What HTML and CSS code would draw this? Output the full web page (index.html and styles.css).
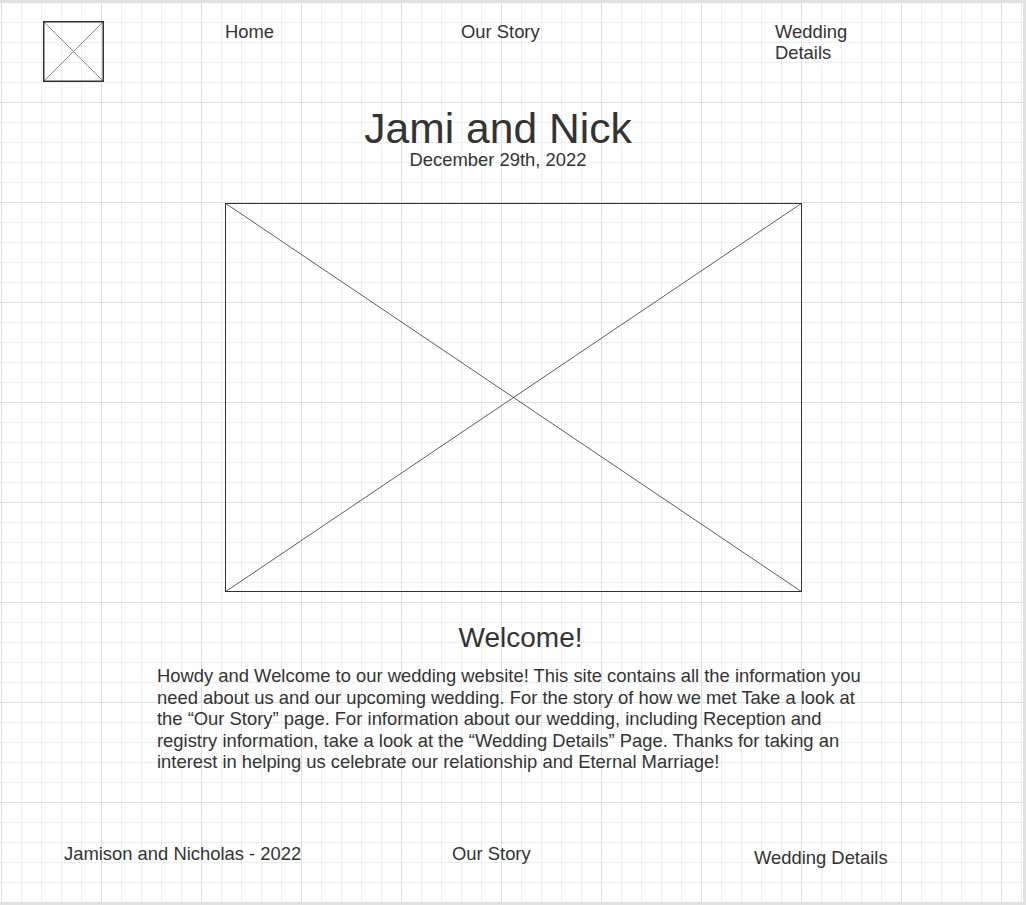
FILE: index.html
```html
<!DOCTYPE html>
<html lang="en">
<head>
<meta charset="utf-8">
<title>Jami and Nick</title>
<link rel="stylesheet" href="styles.css">
</head>
<body>
<div class="page">
  <header class="header">
    <div class="logo">
      <svg width="61" height="61" viewBox="0 0 61 61">
        <line x1="1" y1="1" x2="60" y2="60" class="logo-x"/>
        <line x1="60" y1="1" x2="1" y2="60" class="logo-x"/>
        <rect x="0.75" y="0.75" width="59.5" height="59.5" class="logo-box"/>
      </svg>
    </div>
    <a class="nav-link">Home</a>
    <a class="nav-link">Our Story</a>
    <a class="nav-link nav-narrow">Wedding Details</a>
  </header>

  <section class="hero">
    <h1 class="title">Jami and Nick</h1>
    <div class="date">December 29th, 2022</div>
  </section>

  <div class="photo">
    <svg width="577" height="389" viewBox="0 0 577 389" preserveAspectRatio="none">
      <line x1="0" y1="0" x2="577" y2="389" class="photo-x"/>
      <line x1="577" y1="0" x2="0" y2="389" class="photo-x"/>
      <rect x="0.5" y="0.5" width="576" height="388" class="photo-box"/>
    </svg>
  </div>

  <h2 class="welcome">Welcome!</h2>
  <p class="intro">Howdy and Welcome to our wedding website! This site contains all the information you need about us and our upcoming wedding. For the story of how we met Take a look at the “Our Story” page. For information about our wedding, including Reception and registry information, take a look at the “Wedding Details” Page. Thanks for taking an interest in helping us celebrate our relationship and Eternal Marriage!</p>

  <footer class="footer">
    <div class="foot-item">Jamison and Nicholas - 2022</div>
    <div class="foot-item">Our Story</div>
    <div class="foot-item foot-low">Wedding Details</div>
  </footer>
</div>
</body>
</html>
```

FILE: styles.css
```css
html, body {
  margin: 0;
  padding: 0;
}

body {
  background: #e2e2e2;
  font-family: "Liberation Sans", Arial, Helvetica, sans-serif;
  color: #333333;
}

.page {
  margin-top: 2px;
  width: 1023px;
  height: 900px;
  box-sizing: border-box;
  background-color: #ffffff;
  background-image:
    linear-gradient(to right, #dedede 1px, transparent 1px),
    linear-gradient(to bottom, #dedede 1px, transparent 1px),
    linear-gradient(to right, #eeeeee 1px, transparent 1px),
    linear-gradient(to bottom, #eeeeee 1px, transparent 1px);
  background-size: 100px 100px, 100px 100px, 20px 20px, 20px 20px;
  background-position: 1px 0, 0 0, 1px 0, 0 0;
  overflow: hidden;
}

.header {
  display: grid;
  grid-template-columns: 182px 236px 314px 100px;
  padding-top: 19px;
  padding-left: 43px;
  height: 60px;
  font-size: 18.4px;
  line-height: 20.5px;
}

.logo {
  width: 61px;
  height: 61px;
}

.logo svg {
  display: block;
}

.logo-x {
  stroke: #8c8c8c;
  stroke-width: 1;
}

.logo-box {
  fill: none;
  stroke: #333333;
  stroke-width: 1.5;
}

.nav-link {
  padding-top: 1px;
  color: #333333;
  text-decoration: none;
}

.nav-narrow {
  width: 90px;
}

.hero {
  width: 996px;
  text-align: center;
  margin-top: 26px;
}

.title {
  margin: 0;
  font-size: 42.6px;
  font-weight: normal;
  line-height: 43px;
}

.date {
  font-size: 18.4px;
  line-height: 20px;
}

.photo {
  margin-top: 33px;
  margin-left: 225px;
  width: 577px;
  height: 389px;
}

.photo svg {
  display: block;
}

.photo-x {
  stroke: #333333;
  stroke-width: 0.8;
}

.photo-box {
  fill: none;
  stroke: #333333;
  stroke-width: 1;
}

.welcome {
  margin: 30px 0 0 0;
  padding-left: 18px;
  text-align: center;
  font-size: 28px;
  font-weight: normal;
  line-height: 32px;
}

.intro {
  margin: 11px 0 0 157px;
  width: 716px;
  font-size: 18.4px;
  line-height: 21.5px;
}

.footer {
  display: grid;
  grid-template-columns: 388px 302px 200px;
  padding-left: 64px;
  margin-top: 70px;
  font-size: 18.4px;
  line-height: 21.5px;
}

.foot-low {
  padding-top: 4px;
}
```
